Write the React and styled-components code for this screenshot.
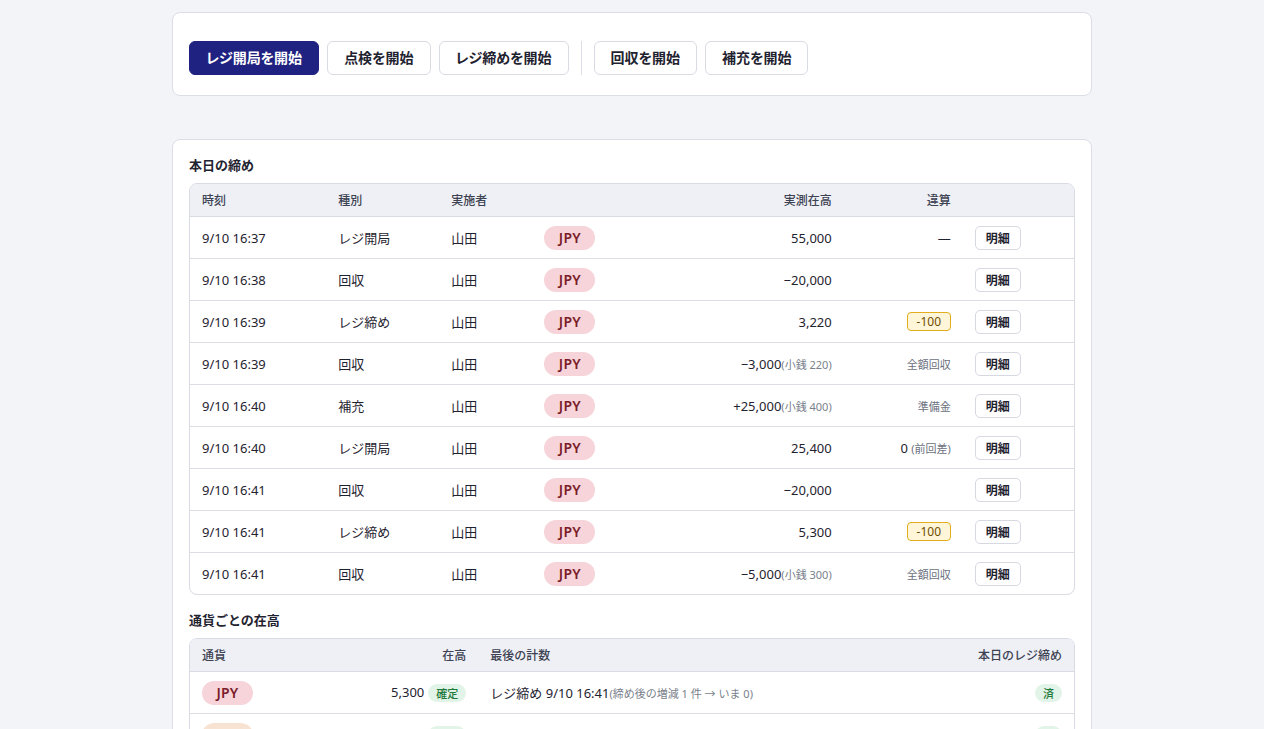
import React from "react";
import styled, { createGlobalStyle } from "styled-components";

const Global = createGlobalStyle`
  html, body { margin: 0; padding: 0; background: #f3f4f8; }
  body {
    font-family: "Noto Sans", "Noto Sans CJK JP", sans-serif;
    color: #1f2330;
    -webkit-font-smoothing: antialiased;
  }
  * { box-sizing: border-box; }
`;

const Page = styled.div`
  width: 920px;
  margin: 0 auto;
  padding: 12px 0 40px;
  display: flex;
  flex-direction: column;
  gap: 43px;
`;

const Card = styled.section`
  background: #fff;
  border: 1px solid #dcdee7;
  border-radius: 8px;
  padding: ${(p) => p.$pad || "16px"};
`;

const Toolbar = styled.div`
  display: flex;
  align-items: center;
  gap: 8px;
`;

const ActionButton = styled.button`
  height: 34px;
  padding: 0 16px;
  border-radius: 6px;
  font-family: inherit;
  font-size: 14px;
  font-weight: 700;
  line-height: 1;
  font-feature-settings: "palt";
  cursor: pointer;
  border: 1px solid ${(p) => (p.$primary ? "#1f2280" : "#d9dbe4")};
  background: ${(p) => (p.$primary ? "#1f2280" : "#fff")};
  color: ${(p) => (p.$primary ? "#fff" : "#1f2330")};
`;

const Divider = styled.span`
  width: 1px;
  height: 34px;
  background: #dcdee7;
  margin: 0 4px;
`;

const SectionTitle = styled.h2`
  margin: 0 0 9px;
  font-size: 13px;
  font-weight: 700;
  line-height: 18px;
  color: #1f2330;
`;

const TableBox = styled.div`
  border: 1px solid #d9dbe4;
  border-radius: 8px;
  overflow: hidden;
  margin-bottom: ${(p) => p.$mb || "0"};
`;

const Table = styled.table`
  width: 100%;
  table-layout: fixed;
  border-collapse: separate;
  border-spacing: 0;
`;

const Th = styled.th`
  height: 33px;
  padding: 0 12px;
  background: #eef0f5;
  border-bottom: 1px solid #d9dbe4;
  font-size: 12px;
  font-weight: 500;
  color: #3d4252;
  text-align: ${(p) => p.$align || "left"};
`;

const Td = styled.td`
  height: 42px;
  padding: 0 12px;
  font-size: 13px;
  color: #1f2330;
  border-bottom: 1px solid #dcdde6;
  text-align: ${(p) => p.$align || "left"};
  white-space: nowrap;
  tr:last-child > & { border-bottom: none; height: 41px; }
`;

const Currency = styled.span`
  display: inline-flex;
  align-items: center;
  justify-content: center;
  width: 51px;
  height: 24px;
  border-radius: 12px;
  background: ${(p) => p.$bg || "#f6d4d9"};
  color: ${(p) => p.$fg || "#7b1c2a"};
  font-size: 14px;
  font-weight: 600;
  letter-spacing: 0.2px;
`;

const Small = styled.span`
  font-size: 11px;
  color: #7a7f8c;
`;

const Note = styled.span`
  font-size: 11px;
  color: #6b7080;
`;

const DiffBadge = styled.span`
  display: inline-flex;
  align-items: center;
  justify-content: center;
  width: 44px;
  height: 19px;
  border-radius: 4px;
  border: 1px solid #e2ad1c;
  background: #fff5d9;
  color: #6e4d00;
  font-size: 12px;
`;

const DetailButton = styled.button`
  width: 46px;
  height: 24px;
  border: 1px solid #d6d8e2;
  border-radius: 5px;
  background: #fff;
  font-family: inherit;
  font-size: 12px;
  font-weight: 700;
  color: #1f2330;
  padding: 0;
  cursor: pointer;
`;

const StatusBadge = styled.span`
  display: inline-flex;
  align-items: center;
  justify-content: center;
  height: 18px;
  padding: 0 8px;
  border-radius: 9px;
  background: #e2f3e7;
  color: #1f7a3c;
  font-size: 11px;
  font-weight: 500;
  margin-left: ${(p) => p.$ml || "0"};
  vertical-align: middle;
`;

const rows = [
  { t: "9/10 16:37", k: "レジ開局", amt: "55,000", diff: { kind: "dash" } },
  { t: "9/10 16:38", k: "回収", amt: "−20,000" },
  { t: "9/10 16:39", k: "レジ締め", amt: "3,220", diff: { kind: "badge", v: "-100" } },
  { t: "9/10 16:39", k: "回収", amt: "−3,000", sub: "(小銭 220)", diff: { kind: "note", v: "全額回収" } },
  { t: "9/10 16:40", k: "補充", amt: "+25,000", sub: "(小銭 400)", diff: { kind: "note", v: "準備金" } },
  { t: "9/10 16:40", k: "レジ開局", amt: "25,400", diff: { kind: "zero" } },
  { t: "9/10 16:41", k: "回収", amt: "−20,000" },
  { t: "9/10 16:41", k: "レジ締め", amt: "5,300", diff: { kind: "badge", v: "-100" } },
  { t: "9/10 16:41", k: "回収", amt: "−5,000", sub: "(小銭 300)", diff: { kind: "note", v: "全額回収" } },
];

function Diff({ d }) {
  if (!d) return null;
  if (d.kind === "dash") return <span>—</span>;
  if (d.kind === "badge") return <DiffBadge>{d.v}</DiffBadge>;
  if (d.kind === "note") return <Note>{d.v}</Note>;
  if (d.kind === "zero")
    return (
      <span>
        0 <Note>(前回差)</Note>
      </span>
    );
  return null;
}

const stock = [
  { c: "JPY", bg: "#f6d4d9", fg: "#7b1c2a", amt: "5,300", last: "レジ締め 9/10 16:41", sub: "(締め後の増減 1 件 → いま 0)", done: "済" },
  { c: "USD", bg: "#f8e3d3", fg: "#7a3f14", amt: "120", last: "レジ締め 9/10 16:41", sub: "", done: "済" },
  { c: "EUR", bg: "#dfe7f7", fg: "#213e7a", amt: "80", last: "レジ締め 9/10 16:41", sub: "", done: "済" },
];

export default function App() {
  return (
    <>
      <Global />
      <Page>
        <Card $pad="28px 16px 20px">
          <Toolbar>
            <ActionButton $primary>レジ開局を開始</ActionButton>
            <ActionButton>点検を開始</ActionButton>
            <ActionButton>レジ締めを開始</ActionButton>
            <Divider />
            <ActionButton>回収を開始</ActionButton>
            <ActionButton>補充を開始</ActionButton>
          </Toolbar>
        </Card>

        <Card>
          <SectionTitle>本日の締め</SectionTitle>
          <TableBox $mb="16px">
            <Table>
              <colgroup>
                <col style={{ width: 136 }} />
                <col style={{ width: 113 }} />
                <col style={{ width: 93 }} />
                <col style={{ width: 100 }} />
                <col style={{ width: 211 }} />
                <col style={{ width: 119 }} />
                <col style={{ width: 111 }} />
              </colgroup>
              <thead>
                <tr>
                  <Th>時刻</Th>
                  <Th>種別</Th>
                  <Th>実施者</Th>
                  <Th />
                  <Th $align="right">実測在高</Th>
                  <Th $align="right">違算</Th>
                  <Th />
                </tr>
              </thead>
              <tbody>
                {rows.map((r, i) => (
                  <tr key={i}>
                    <Td>{r.t}</Td>
                    <Td>{r.k}</Td>
                    <Td>山田</Td>
                    <Td>
                      <Currency>JPY</Currency>
                    </Td>
                    <Td $align="right">
                      {r.amt}
                      {r.sub && <Small>{r.sub}</Small>}
                    </Td>
                    <Td $align="right">
                      <Diff d={r.diff} />
                    </Td>
                    <Td>
                      <DetailButton>明細</DetailButton>
                    </Td>
                  </tr>
                ))}
              </tbody>
            </Table>
          </TableBox>

          <SectionTitle>通貨ごとの在高</SectionTitle>
          <TableBox>
            <Table>
              <colgroup>
                <col style={{ width: 150 }} />
                <col style={{ width: 138 }} />
                <col style={{ width: 475 }} />
                <col style={{ width: 120 }} />
              </colgroup>
              <thead>
                <tr>
                  <Th>通貨</Th>
                  <Th $align="right">在高</Th>
                  <Th>最後の計数</Th>
                  <Th $align="right">本日のレジ締め</Th>
                </tr>
              </thead>
              <tbody>
                {stock.map((s) => (
                  <tr key={s.c}>
                    <Td>
                      <Currency $bg={s.bg} $fg={s.fg}>{s.c}</Currency>
                    </Td>
                    <Td $align="right">
                      {s.amt}
                      <StatusBadge $ml="4px">確定</StatusBadge>
                    </Td>
                    <Td>
                      {s.last}
                      {s.sub && <Small>{s.sub}</Small>}
                    </Td>
                    <Td $align="right">
                      <StatusBadge>{s.done}</StatusBadge>
                    </Td>
                  </tr>
                ))}
              </tbody>
            </Table>
          </TableBox>
        </Card>
      </Page>
    </>
  );
}
